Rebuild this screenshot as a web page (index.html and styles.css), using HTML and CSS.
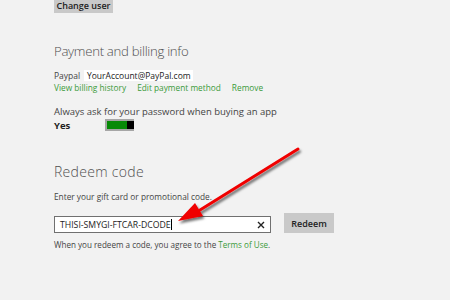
FILE: index.html
```html
<!DOCTYPE html>
<html>
  <head>
    <title>Account settings</title>
    <link rel="stylesheet" href="styles.css">
  </head>
  <body>
    <div id="page">
      <button class="btn change">Change user</button>

      <h2 class="title first">Payment and billing info</h2>
      <div class="row paypal">
        <span class="label">Paypal</span>
        <span class="account">YourAccount@PayPal.com</span>
      </div>
      <div class="row links">
        <a href="#">View billing history</a>
        <a href="#">Edit payment method</a>
        <a href="#">Remove</a>
      </div>

      <div class="text ask">Always ask for your password when buying an app</div>
      <div class="row yes">
        <span class="bold">Yes</span>
        <span class="toggle"><span class="fill"></span><span class="thumb"></span></span>
      </div>

      <h2 class="title second">Redeem code</h2>
      <div class="text enter">Enter your gift card or promotional code.</div>
      <div class="row code">
        <div class="codebox">
          <span class="codetext">THISI-SMYGI-FTCAR-DCODE</span><span class="caret"></span>
          <svg class="clear" width="8" height="8" viewBox="0 0 8 8">
            <path d="M1 1 L7 7 M7 1 L1 7" stroke="#222" stroke-width="1.4"/>
          </svg>
        </div>
        <button class="btn redeem">Redeem</button>
      </div>
      <div class="text terms">When you redeem a code, you agree to the <a href="#">Terms of Use</a>.</div>
    </div>

    <svg id="arrow" width="450" height="300" viewBox="0 0 450 300">
      <defs>
        <filter id="shadow" x="-20%" y="-20%" width="140%" height="140%">
          <feDropShadow dx="1.5" dy="2.5" stdDeviation="1.3" flood-color="#000" flood-opacity="0.55"/>
        </filter>
      </defs>
      <g filter="url(#shadow)">
        <line x1="298" y1="149" x2="200" y2="210" stroke="#f00000" stroke-width="3" stroke-linecap="round"/>
        <polygon points="178,221 195,203 203,216" fill="#f00000"/>
      </g>
    </svg>
  </body>
</html>
```

FILE: styles.css
```css
body {
  margin: 0;
  background: #f2f2f2;
  font-family: "Open Sans", "Noto Sans", sans-serif;
  font-size: 9.5px;
  color: #444;
  width: 450px;
  height: 300px;
  overflow: hidden;
}

#page {
  padding-left: 54px;
}

a {
  color: #3a9a3a;
  text-decoration: none;
}

.btn {
  display: block;
  border: none;
  background: #c9c9c9;
  color: #222;
  font-family: "Open Sans", "Noto Sans", sans-serif;
  font-size: 9px;
  font-weight: 600;
  padding: 0;
}

.change {
  width: 59px;
  height: 13px;
  line-height: 11px;
  padding-bottom: 2px;
}

.title {
  margin: 0;
  font-size: 14px;
  font-weight: 300;
  line-height: 18px;
  color: #505050;
}

.first {
  margin-top: 29px;
  font-size: 13.2px;
  letter-spacing: -0.3px;
}

.second {
  margin-top: 32px;
  letter-spacing: 0.3px;
}

.row {
  display: flex;
  align-items: center;
}

.paypal {
  margin-top: 9px;
  height: 12px;
  font-size: 8.5px;
}

.label {
  flex-shrink: 0;
  width: 30px;
}

.account {
  flex-shrink: 0;
  width: 106px;
  height: 11px;
  line-height: 11px;
  padding-left: 3px;
  background: #fff;
  color: #222;
}

.links {
  margin-top: 1px;
  line-height: 12px;
  gap: 11px;
  font-size: 8.3px;
}

.text {
  line-height: 12px;
}

.ask {
  margin-top: 12px;
}

.yes {
  margin-top: 1px;
  height: 12px;
}

.bold {
  font-weight: 700;
  color: #222;
  width: 51px;
  flex-shrink: 0;
}

.toggle {
  display: flex;
  width: 29px;
  height: 12px;
  box-sizing: border-box;
  border: 2px solid #a6a6a6;
  border-right: none;
}

.fill {
  flex: 1;
  background: #078a07;
}

.thumb {
  width: 7px;
  background: #000;
}

.enter {
  margin-top: 10px;
  font-size: 8.3px;
}

.code {
  margin-top: 10px;
  align-items: flex-end;
}

.codebox {
  display: flex;
  align-items: center;
  width: 217px;
  height: 17px;
  box-sizing: border-box;
  border: 1px solid #707070;
  background: #fff;
  padding-left: 5px;
  color: #222;
}

.codetext {
  font-size: 8.7px;
}

.caret {
  width: 1px;
  height: 11px;
  background: #000;
}

.clear {
  margin-left: auto;
  margin-right: 5px;
}

.redeem {
  margin-left: 13px;
  width: 50px;
  height: 20px;
}

.terms {
  margin-top: 6px;
  font-size: 8.1px;
}

#arrow {
  position: absolute;
  left: 0;
  top: 0;
  pointer-events: none;
}
```
